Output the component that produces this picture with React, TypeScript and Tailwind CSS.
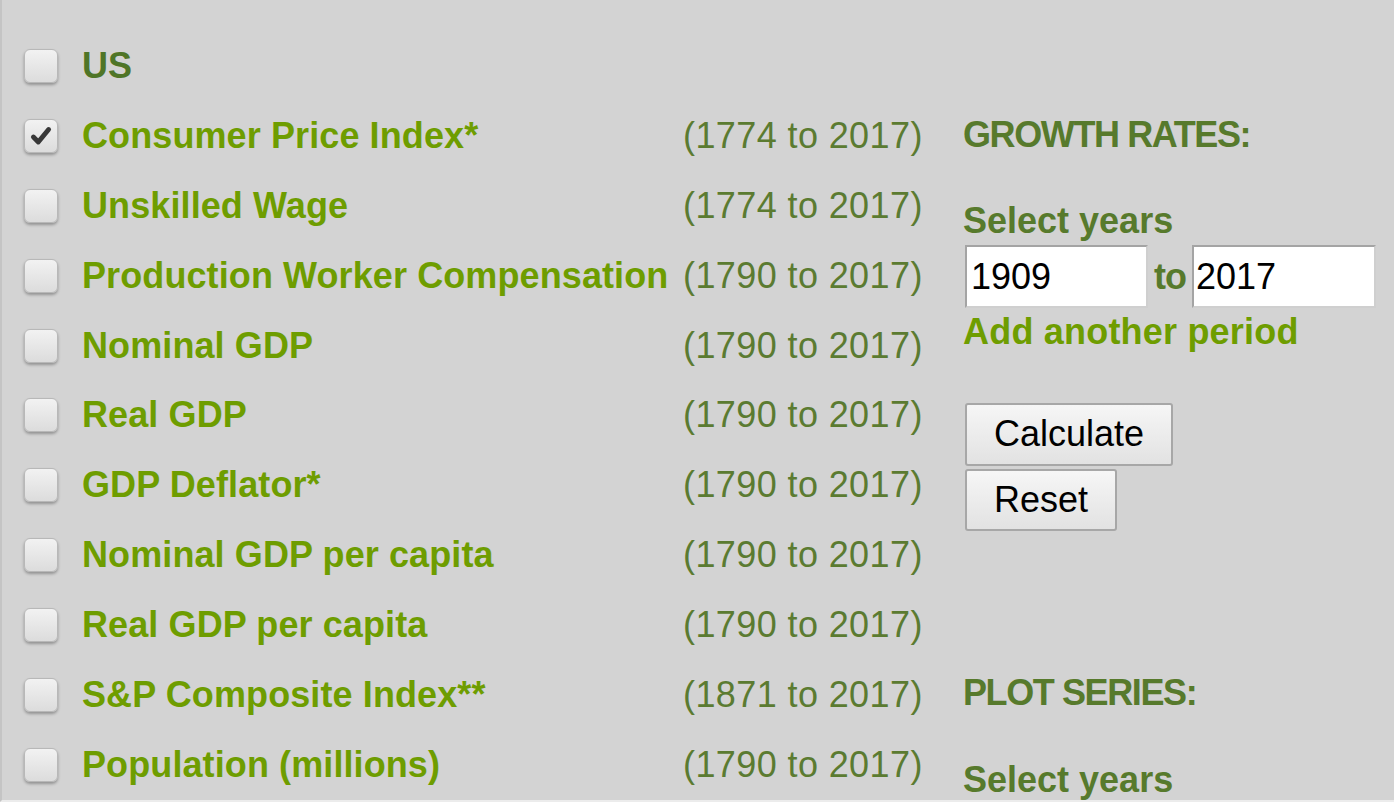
import { useState } from 'react'

type Series = { name: string; range: string; checked?: boolean; dark?: boolean }

const series: Series[] = [
  { name: 'US', range: '', dark: true },
  { name: 'Consumer Price Index*', range: '(1774 to 2017)', checked: true },
  { name: 'Unskilled Wage', range: '(1774 to 2017)' },
  { name: 'Production Worker Compensation', range: '(1790 to 2017)' },
  { name: 'Nominal GDP', range: '(1790 to 2017)' },
  { name: 'Real GDP', range: '(1790 to 2017)' },
  { name: 'GDP Deflator*', range: '(1790 to 2017)' },
  { name: 'Nominal GDP per capita', range: '(1790 to 2017)' },
  { name: 'Real GDP per capita', range: '(1790 to 2017)' },
  { name: 'S&P Composite Index**', range: '(1871 to 2017)' },
  { name: 'Population (millions)', range: '(1790 to 2017)' },
]

function Box({ checked, onClick }: { checked: boolean; onClick: () => void }) {
  return (
    <button
      type="button"
      onClick={onClick}
      className="w-[34px] h-[34px] flex-shrink-0 flex items-center justify-center rounded-[6px] border border-[#b8b8b8] bg-gradient-to-b from-[#f2f2f2] to-[#dcdcdc] shadow-[0_2px_3px_rgba(0,0,0,0.3)]"
    >
      {checked && (
        <svg className="w-[26px] h-[26px]" viewBox="0 0 24 24" fill="none" stroke="#383838" strokeWidth={4.5} strokeLinecap="round" strokeLinejoin="round">
          <path d="M5 13l4.5 4.5L19 6" />
        </svg>
      )}
    </button>
  )
}

export default function App() {
  const [checked, setChecked] = useState<boolean[]>(series.map(s => !!s.checked))
  const [from, setFrom] = useState('1909')
  const [to, setTo] = useState('2017')

  function toggle(i: number) {
    setChecked(prev => prev.map((v, j) => (j === i ? !v : v)))
  }

  const heading = 'text-[36px] leading-[40px] font-bold tracking-[-1.4px] text-[#577a2c]'
  const btn = 'h-[63px] px-[27px] text-[36px] leading-none text-black rounded-[3px] border-2 border-[#a7a7a7] bg-gradient-to-b from-[#f6f6f6] to-[#e2e2e2]'

  return (
    <div className="w-full h-[802px] overflow-hidden bg-[#d3d3d3] border-l-2 border-[#c4c4c4] border-b-2 border-b-[#ececec] flex font-['Liberation_Sans',Arial,sans-serif]">
      {/* Series list */}
      <div className="flex flex-col pt-[31px] pl-[22px]">
        {series.map((s, i) => (
          <div key={s.name} className="h-[70px] flex items-center">
            <Box checked={checked[i]} onClick={() => toggle(i)} />
            <span className={`ml-[24px] w-[601px] text-[36px] font-bold tracking-[0.1px] whitespace-nowrap ${s.dark ? 'text-[#4f7527]' : 'text-[#6e9d00]'}`}>
              {s.name}
            </span>
            <span className="w-[280px] text-[36px] tracking-[0.4px] text-[#5b7b31] whitespace-nowrap">{s.range}</span>
          </div>
        ))}
      </div>

      {/* Growth rates / plot series */}
      <div className="flex flex-col items-start pt-[115px]">
        <div className={heading}>GROWTH RATES:</div>
        <div className="mt-[46px] text-[36px] leading-[40px] font-bold text-[#577a2c]">Select years</div>
        <div className="mt-[4px] flex items-center">
          <input
            value={from}
            onChange={e => setFrom(e.target.value)}
            className="w-[183px] h-[63px] ml-[2px] bg-white border-2 border-[#a4a4a4] border-b-[#cfcfcf] border-r-[#cfcfcf] pl-[4px] text-[36px] text-black outline-none"
          />
          <span className="mx-[6px] text-[36px] font-bold tracking-[-1px] text-[#577a2c]">to</span>
          <input
            value={to}
            onChange={e => setTo(e.target.value)}
            className="w-[184px] h-[63px] bg-white border-2 border-[#a4a4a4] border-b-[#cfcfcf] border-r-[#cfcfcf] pl-[2px] text-[36px] text-black outline-none"
          />
        </div>
        <div className="mt-[4px] text-[36px] leading-[40px] font-bold tracking-[0.2px] text-[#6e9d00] cursor-pointer">Add another period</div>
        <button type="button" className={`mt-[51px] ml-[2px] ${btn}`}>Calculate</button>
        <button type="button" className={`mt-[3px] ml-[2px] ${btn}`}>Reset</button>
        <div className={`mt-[142px] ${heading}`}>PLOT SERIES:</div>
        <div className="mt-[47px] text-[36px] leading-[40px] font-bold text-[#577a2c]">Select years</div>
      </div>
    </div>
  )
}
